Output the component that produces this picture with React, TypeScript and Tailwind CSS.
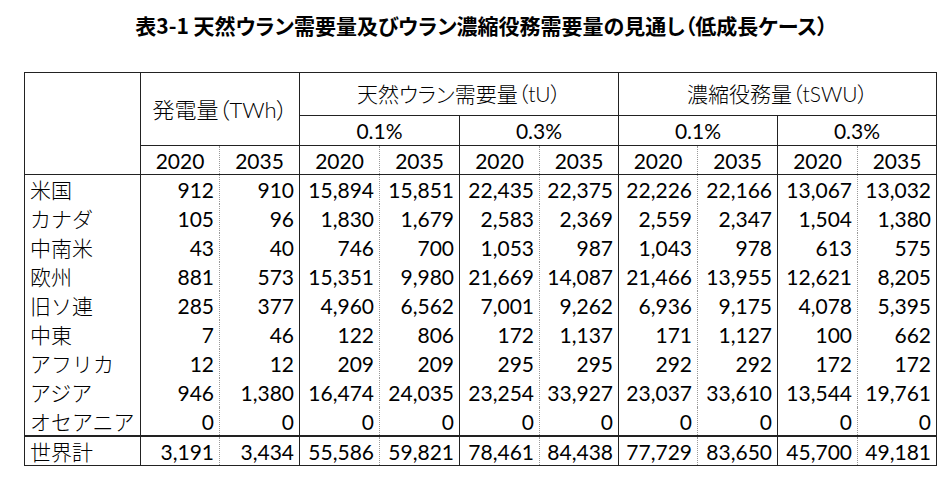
import React from 'react'

type Row = { label: string; values: string[]; total?: boolean }

const rows: Row[] = [
  { label: '米国', values: ['912', '910', '15,894', '15,851', '22,435', '22,375', '22,226', '22,166', '13,067', '13,032'] },
  { label: 'カナダ', values: ['105', '96', '1,830', '1,679', '2,583', '2,369', '2,559', '2,347', '1,504', '1,380'] },
  { label: '中南米', values: ['43', '40', '746', '700', '1,053', '987', '1,043', '978', '613', '575'] },
  { label: '欧州', values: ['881', '573', '15,351', '9,980', '21,669', '14,087', '21,466', '13,955', '12,621', '8,205'] },
  { label: '旧ソ連', values: ['285', '377', '4,960', '6,562', '7,001', '9,262', '6,936', '9,175', '4,078', '5,395'] },
  { label: '中東', values: ['7', '46', '122', '806', '172', '1,137', '171', '1,127', '100', '662'] },
  { label: 'アフリカ', values: ['12', '12', '209', '209', '295', '295', '292', '292', '172', '172'] },
  { label: 'アジア', values: ['946', '1,380', '16,474', '24,035', '23,254', '33,927', '23,037', '33,610', '13,544', '19,761'] },
  { label: 'オセアニア', values: ['0', '0', '0', '0', '0', '0', '0', '0', '0', '0'] },
]

const total: Row = {
  label: '世界計',
  values: ['3,191', '3,434', '55,586', '59,821', '78,461', '84,438', '77,729', '83,650', '45,700', '49,181'],
  total: true,
}

const widths = [116, 79, 80, 80, 80, 80, 79, 79, 80, 80, 79]

// 2020 columns get a dotted line on their right, 2035 ones a solid line
function sideBorder(i: number) {
  return i % 2 === 0 ? 'border-r border-r-[#999] border-dotted' : 'border-r border-r-[#222] border-solid'
}

function DataRow({ row }: { row: Row }) {
  return (
    <tr className={row.total ? 'h-[29px] border-t-2 border-t-[#222]' : 'h-[29.1px]'}>
      <td className="border-r border-r-[#222] pl-[5px] text-left font-['Noto_Sans_CJK_JP',sans-serif] text-[21px] font-light leading-none">
        {row.label}
      </td>
      {row.values.map((v, i) => (
        <td key={i} className={`${sideBorder(i)} pr-[5px] text-right leading-none`}>
          {v}
        </td>
      ))}
    </tr>
  )
}

export default function App() {
  return (
    <div className="h-[480px] w-[952px] bg-white text-black font-['Lato','Noto_Sans_CJK_JP',sans-serif]">
      <div className="flex h-[72px] justify-center pl-[11px] pt-[11px]">
        <h1 className="text-[21px] font-bold leading-[28px] [font-feature-settings:'palt'] font-['Noto_Sans_CJK_JP',sans-serif]">
          表3-1 天然ウラン需要量及びウラン濃縮役務需要量の見通し（低成長ケース）
        </h1>
      </div>
      <div className="pl-[24px]">
        <table className="table-fixed border-collapse border border-[#222] text-[21px]">
          <colgroup>
            {widths.map((w, i) => (
              <col key={i} style={{ width: w }} />
            ))}
          </colgroup>
          <thead>
            <tr className="h-[43px]">
              <th rowSpan={3} className="border-r border-r-[#222]" />
              <th colSpan={2} rowSpan={2} className="border-r border-b border-[#222] text-[22px] font-light [font-feature-settings:'palt']">
                発電量（TWh）
              </th>
              <th colSpan={4} className="border-r border-b border-[#222] text-[21px] font-light [font-feature-settings:'palt']">
                天然ウラン需要量（tU）
              </th>
              <th colSpan={4} className="border-r border-b border-[#222] text-[21px] font-light [font-feature-settings:'palt']">
                濃縮役務量（tSWU）
              </th>
            </tr>
            <tr className="h-[30px]">
              {['0.1%', '0.3%', '0.1%', '0.3%'].map((t, i) => (
                <th key={i} colSpan={2} className="border-r border-b border-[#222] font-normal leading-none">
                  {t}
                </th>
              ))}
            </tr>
            <tr className="h-[29px] border-b border-b-[#222]">
              {Array.from({ length: 10 }).map((_, i) => (
                <th key={i} className={`${sideBorder(i)} border-b border-b-[#222] font-normal leading-none`}>
                  {i % 2 === 0 ? '2020' : '2035'}
                </th>
              ))}
            </tr>
          </thead>
          <tbody>
            {rows.map((r) => (
              <DataRow key={r.label} row={r} />
            ))}
            <DataRow row={total} />
          </tbody>
        </table>
      </div>
    </div>
  )
}
